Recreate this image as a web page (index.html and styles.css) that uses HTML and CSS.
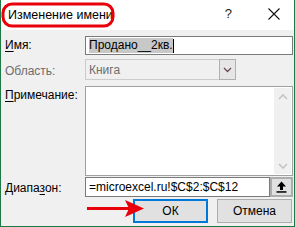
FILE: index.html
```html
<!DOCTYPE html>
<html lang="ru">
<head>
<meta charset="utf-8">
<link rel="stylesheet" href="styles.css">
</head>
<body>
<div class="window">
  <div class="titlebar">
    <span class="title">Изменение имени</span>
    <span class="help">?</span>
    <svg class="close" width="12" height="12" viewBox="0 0 12 12"><path d="M0.5 0.5L11.5 11.5M11.5 0.5L0.5 11.5" stroke="#111" stroke-width="1.1" fill="none"/></svg>
  </div>
  <div class="content">
    <div class="row row-name">
      <label class="lbl"><u>И</u>мя:</label>
      <div class="input name-input"><span class="sel">Продано__2кв.</span><span class="caret"></span></div>
    </div>
    <div class="row row-scope">
      <label class="lbl disabled">Область:</label>
      <div class="combo">
        <span class="combo-text">Книга</span>
        <span class="combo-btn"><svg width="9" height="6" viewBox="0 0 9 6"><path d="M1 1L4.5 4.5L8 1" stroke="#6b4a55" stroke-width="1.3" fill="none"/></svg></span>
      </div>
    </div>
    <div class="row row-note">
      <label class="lbl"><u>П</u>римечание:</label>
      <div class="textarea">
        <div class="scrollbar">
          <svg width="10" height="6" viewBox="0 0 10 6"><path d="M1 5L5 1L9 5" stroke="#c4c4c4" stroke-width="1.6" fill="none"/></svg>
          <svg width="10" height="6" viewBox="0 0 10 6"><path d="M1 1L5 5L9 1" stroke="#c4c4c4" stroke-width="1.6" fill="none"/></svg>
        </div>
      </div>
    </div>
    <div class="row row-range">
      <label class="lbl">Диапа<u>з</u>он:</label>
      <div class="range">
        <div class="input range-input">=microexcel.ru!$C$2:$C$12</div>
        <div class="collapse-btn"><svg width="11" height="12" viewBox="0 0 11 12"><path d="M5.5 0.5L10 5.5H7V9H4V5.5H1Z" fill="#000"/><rect x="0.5" y="10.2" width="10" height="1.5" fill="#000"/></svg></div>
      </div>
    </div>
    <div class="buttons">
      <button class="btn btn-ok">ОК</button>
      <button class="btn">Отмена</button>
    </div>
  </div>
  <svg class="title-mark" width="114" height="26" viewBox="0 0 114 26"><rect x="2" y="2" width="110" height="22" rx="9" ry="9" fill="none" stroke="#e8000b" stroke-width="3"/></svg>
  <svg class="arrow" width="60" height="20" viewBox="0 0 60 20"><path d="M0 9.5H42" stroke="#e8000b" stroke-width="3.2"/><path d="M38 1L57 9.5L38 18L42 9.5Z" fill="#e8000b"/></svg>
</div>
</body>
</html>
```
FILE: styles.css
```css
* { box-sizing: border-box; }
html, body { margin: 0; padding: 0; }
body {
  width: 295px;
  height: 227px;
  font-family: "Liberation Sans", Arial, sans-serif;
  font-size: 12px;
  color: #000;
  background: #fff;
}
.window {
  position: relative;
  width: 295px;
  height: 227px;
  border: 1px solid #1d7a45;
  border-top: none;
  display: flex;
  flex-direction: column;
}
.titlebar {
  height: 30px;
  background: #fff;
  display: flex;
  align-items: center;
  padding: 0 0 0 7px;
}
.title {
  font-size: 12.5px;
  flex: 1;
  margin-top: -1px;
}
.help {
  font-size: 13px;
  margin-right: 36px;
  margin-top: -3px;
  color: #222;
}
.close { margin-right: 14px; margin-top: -2px; }
.content {
  flex: 1;
  background: #f0f0f0;
  padding: 6px 1px 0 4px;
  display: flex;
  flex-direction: column;
}
.row {
  display: grid;
  grid-template-columns: 80px 1fr;
}
.lbl { line-height: 14px; }
.lbl u { text-decoration-thickness: 1px; text-underline-offset: 2px; }
.disabled { color: #6d6d6d; }
.row-name .lbl { padding-top: 2px; }
.input {
  background: #fff;
  border: 1px solid #7a7a7a;
  height: 20px;
  display: flex;
  align-items: center;
  padding-left: 3px;
  white-space: nowrap;
}
.name-input { height: 19px; }
.sel { background: #c8c8c8; line-height: 15px; padding-right: 0; }
.caret { width: 1px; height: 14px; background: #000; }
.row-scope { margin-top: 4px; }
.row-scope .lbl { padding-top: 5px; }
.combo {
  width: 151px;
  height: 21px;
  border: 1px solid #cccccc;
  background: #f0f0f0;
  display: flex;
  align-items: stretch;
}
.combo-text { flex: 1; color: #6d6d6d; padding: 3px 0 0 3px; }
.combo-btn {
  width: 17px;
  background: #e6e6e6;
  border: 1px solid #b0b0b0;
  margin: -1px -1px -1px 0;
  display: flex;
  align-items: center;
  justify-content: center;
}
.row-note { margin-top: 6px; }
.row-note .lbl { padding-top: 2px; }
.textarea {
  height: 90px;
  background: #fff;
  border: 1px solid #a0a0a0;
  display: flex;
  justify-content: flex-end;
  padding: 1px;
}
.scrollbar {
  width: 17px;
  background: #f0f0f0;
  display: flex;
  flex-direction: column;
  justify-content: space-between;
  align-items: center;
  padding: 6px 0 5px;
}
.row-range { margin-top: 1px; }
.row-range .lbl { padding-top: 4px; }
.range { display: flex; height: 20px; }
.range-input { flex: 1; border-color: #7a7a7a; }
.collapse-btn {
  width: 23px;
  height: 20px;
  background: #e1e1e1;
  border: 2px solid #adadad;
  display: flex;
  align-items: center;
  justify-content: center;
}
.buttons {
  display: flex;
  justify-content: flex-end;
  gap: 9px;
  margin-top: 2px;
  padding-right: 1px;
}
.btn {
  width: 75px;
  height: 24px;
  background: #e1e1e1;
  border: 1px solid #adadad;
  font-family: inherit;
  font-size: 12px;
  padding: 0;
  color: #000;
}
.btn-ok { border: 2px solid #0078d7; }
.title-mark { position: absolute; left: 0; top: 2px; }
.arrow { position: absolute; left: 86px; top: 199px; }
```
